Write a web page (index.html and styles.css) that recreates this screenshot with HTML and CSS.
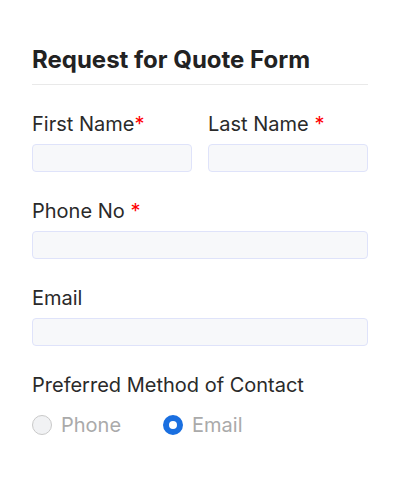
FILE: index.html
```html
<!DOCTYPE html>
<html>
<head>
<meta charset="utf-8">
<link rel="stylesheet" href="styles.css">
</head>
<body>
<form class="form">
  <h1 class="title">Request for Quote Form</h1>
  <div class="row">
    <div class="field">
      <label class="label">First Name<span class="req">*</span></label>
      <input class="input" type="text">
    </div>
    <div class="field">
      <label class="label">Last Name <span class="req">*</span></label>
      <input class="input" type="text">
    </div>
  </div>
  <div class="field">
    <label class="label">Phone No <span class="req">*</span></label>
    <input class="input" type="text">
  </div>
  <div class="field">
    <label class="label">Email</label>
    <input class="input" type="text">
  </div>
  <div class="field">
    <label class="label">Preferred Method of Contact</label>
    <div class="radios">
      <span class="radio-opt"><span class="radio"></span><span class="radio-text">Phone</span></span>
      <span class="radio-opt"><span class="radio checked"></span><span class="radio-text">Email</span></span>
    </div>
  </div>
</form>
</body>
</html>
```
FILE: styles.css
```css
* { box-sizing: border-box; }
html, body { margin: 0; padding: 0; background: #fff; }
body { font-family: Inter, "Noto Sans", sans-serif; color: #2a2a2a; }
.form { padding: 44px 32px 32px; display: flex; flex-direction: column; }
.title {
  margin: 0;
  font-size: 24px;
  line-height: 32px;
  font-weight: 700;
  color: #222;
  padding-bottom: 8px;
  border-bottom: 1px solid #e9e9e9;
  margin-bottom: 27px;
}
.row { display: grid; grid-template-columns: 1fr 1fr; gap: 16px; }
.field { display: flex; flex-direction: column; margin-bottom: 27px; }
.label { font-size: 20px; line-height: 24px; margin-bottom: 8px; color: #2a2a2a; }
.req { color: #f00; }
.input {
  height: 28px;
  border: 1px solid #dfe3fa;
  background: #f7f8fa;
  border-radius: 4px;
  width: 100%;
  outline: none;
}
.radios { display: flex; gap: 42px; margin-top: 8px; }
.radio-opt { display: flex; align-items: center; gap: 9px; }
.radio {
  width: 20px; height: 20px; border-radius: 50%;
  border: 1px solid #c9c9c9; background: #f1f2f4;
}
.radio.checked { border: 6px solid #1a6fe0; background: #fff; }
.radio-text { font-size: 20px; line-height: 24px; color: #aaa; }
```
